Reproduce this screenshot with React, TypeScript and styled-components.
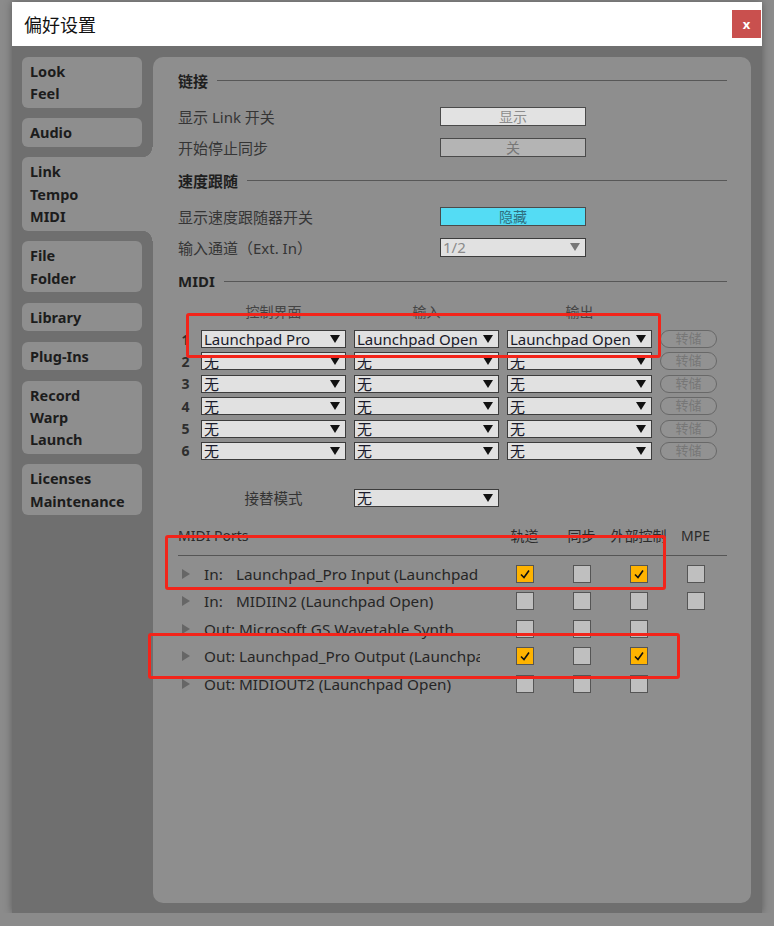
import styled, { createGlobalStyle } from 'styled-components';

const GlobalStyle = createGlobalStyle`
  html, body {
    margin: 0;
    padding: 0;
    background: #8b8b8b;
  }
  body {
    font-family: "Noto Sans", "Noto Sans CJK SC", sans-serif;
  }
`;

const Win = styled.div`
  position: relative;
  margin: 2px 0 0 12px;
  width: 750px;
  box-shadow: 0 0 8px rgba(0, 0, 0, 0.35);
`;

const TitleBar = styled.div`
  height: 44px;
  background: #fff;
  display: flex;
  align-items: center;
  justify-content: space-between;
  padding: 0 1px 0 12px;
`;

const Title = styled.div`
  font-family: "Noto Sans CJK SC", sans-serif;
  font-size: 18px;
  color: #111;
`;

const CloseBtn = styled.div`
  width: 29px;
  height: 28px;
  background: #c9504e;
  color: #fff;
  font-weight: bold;
  font-size: 13px;
  display: flex;
  align-items: center;
  justify-content: center;
`;

const Body = styled.div`
  height: 867px;
  box-sizing: border-box;
  background: #6f6f6f;
  display: flex;
  gap: 11px;
  padding: 11px 11px 10px 10px;
`;

const Sidebar = styled.div`
  width: 120px;
  flex: none;
  display: flex;
  flex-direction: column;
  gap: 10.6px;
`;

const Tab = styled.div<{ $active?: boolean }>`
  position: relative;
  background: #8e8e8e;
  border-radius: ${(p) => (p.$active ? '6px 0 0 6px' : '6px')};
  width: ${(p) => (p.$active ? '131px' : '120px')};
  padding: 3px 8px;
  box-sizing: border-box;
  font-size: 14.5px;
  font-weight: bold;
  line-height: 22.4px;
  color: #1c1c1c;

  ${(p) =>
    p.$active &&
    `
    &::before, &::after {
      content: '';
      position: absolute;
      left: 120px;
      width: 11px;
      height: 10px;
    }
    &::before {
      top: -10px;
      background: radial-gradient(circle at 0 0, transparent 10px, #8e8e8e 10.5px);
    }
    &::after {
      bottom: -10px;
      background: radial-gradient(circle at 0 100%, transparent 10px, #8e8e8e 10.5px);
    }
  `}
`;

const Panel = styled.div`
  flex: 1;
  background: #8e8e8e;
  border-radius: 10px;
  padding: 13px 24px 0 25px;
  box-sizing: border-box;
`;

const SectionHead = styled.div<{ $mt?: number }>`
  display: flex;
  align-items: center;
  height: 20px;
  margin-top: ${(p) => p.$mt ?? 0}px;
  font-size: 15px;
  font-weight: bold;
  color: #1e1e1e;

  &::after {
    content: '';
    flex: 1;
    height: 1px;
    background: #575757;
    margin-left: 9px;
  }
`;

const SettingRow = styled.div<{ $mt: number }>`
  display: flex;
  align-items: center;
  height: 20px;
  margin-top: ${(p) => p.$mt}px;
`;

const Label = styled.div`
  width: 262px;
  font-size: 15px;
  color: #353535;
`;

const Toggle = styled.div<{ $bg: string; $fg: string }>`
  width: 146px;
  height: 19px;
  box-sizing: border-box;
  border: 1px solid #4a4a4a;
  background: ${(p) => p.$bg};
  color: ${(p) => p.$fg};
  font-size: 14px;
  line-height: 17px;
  text-align: center;
`;

const Select = styled.div<{ $w?: number; $dim?: boolean }>`
  width: ${(p) => p.$w ?? 145}px;
  height: ${(p) => (p.$dim ? 19 : 18)}px;
  box-sizing: border-box;
  border: 1px solid #3c3c3c;
  background: #e1e1e1;
  color: ${(p) => (p.$dim ? '#8a8a8a' : '#1a1a2a')};
  display: flex;
  align-items: center;
  justify-content: space-between;
  padding: 0 5px 0 2px;
  font-size: 15px;
  white-space: nowrap;
  overflow: hidden;
`;

const Arrow = styled.span<{ $dim?: boolean }>`
  flex: none;
  width: 0;
  height: 0;
  border-left: 5px solid transparent;
  border-right: 5px solid transparent;
  border-top: 8px solid ${(p) => (p.$dim ? '#777' : '#111')};
`;

const TableHead = styled.div`
  display: grid;
  grid-template-columns: 15px 145px 145px 145px 57px;
  column-gap: 8px;
  margin-top: 13px;
  height: 16px;
  font-size: 14px;
  line-height: 16px;
  color: #444;
  text-align: center;
`;

const MidiGrid = styled.div<{ $mt: number }>`
  display: grid;
  grid-template-columns: 15px 145px 145px 145px 57px;
  column-gap: 8px;
  row-gap: 4.4px;
  grid-auto-rows: 18px;
  align-items: center;
  margin-top: ${(p) => p.$mt}px;
`;

const RowNum = styled.div`
  font-size: 14px;
  font-weight: bold;
  color: #2e2e2e;
  text-align: center;
`;

const DumpBtn = styled.div`
  height: 18px;
  box-sizing: border-box;
  border: 1.5px solid #686868;
  border-radius: 9px;
  background: #929292;
  color: #777;
  font-size: 13px;
  line-height: 15px;
  text-align: center;
`;

const AltLabel = styled.div`
  grid-column: 2;
  text-align: center;
  font-size: 14.5px;
  color: #333;
`;

const PortsHead = styled.div`
  display: grid;
  grid-template-columns: 318px repeat(4, 57px);
  margin-top: 21px;
  height: 27px;
  border-bottom: 1px solid #555;
  font-size: 14px;
  line-height: 16px;
  color: #2a2a2a;
  padding-right: 3px;

  & > div:not(:first-child) {
    text-align: center;
  }
`;

const PortsList = styled.div`
  margin-top: 4px;
`;

const PortRow = styled.div`
  display: grid;
  grid-template-columns: 318px repeat(4, 57px);
  height: 27.5px;
  align-items: center;
  justify-items: center;
`;

const PortName = styled.div`
  justify-self: start;
  width: 302px;
  display: flex;
  align-items: center;
  overflow: hidden;
  white-space: nowrap;
  font-size: 15.3px;
  color: #262626;
`;

const Tri = styled.span`
  flex: none;
  width: 0;
  height: 0;
  border-top: 5px solid transparent;
  border-bottom: 5px solid transparent;
  border-left: 8px solid #666;
  margin: 0 14px 0 4px;
`;

const Dir = styled.span`
  flex: none;
  width: 32px;
`;

const Check = styled.div<{ $on?: boolean }>`
  width: 18px;
  height: 18px;
  box-sizing: border-box;
  border: 1.5px solid #555;
  background: ${(p) => (p.$on ? '#ffb300' : '#bfbfbf')};
  display: flex;
  align-items: center;
  justify-content: center;
`;

const Mark = styled.div<{ $l: number; $t: number; $w: number; $h: number }>`
  position: absolute;
  left: ${(p) => p.$l}px;
  top: ${(p) => p.$t}px;
  width: ${(p) => p.$w}px;
  height: ${(p) => p.$h}px;
  box-sizing: border-box;
  border: 3px solid #f3241a;
  border-radius: 3px;
  pointer-events: none;
`;

const tabs = [
  ['Look', 'Feel'],
  ['Audio'],
  ['Link', 'Tempo', 'MIDI'],
  ['File', 'Folder'],
  ['Library'],
  ['Plug-Ins'],
  ['Record', 'Warp', 'Launch'],
  ['Licenses', 'Maintenance'],
];

const surfaces = [
  ['Launchpad Pro', 'Launchpad Open', 'Launchpad Open'],
  ['无', '无', '无'],
  ['无', '无', '无'],
  ['无', '无', '无'],
  ['无', '无', '无'],
  ['无', '无', '无'],
];

type Port = { dir: string; name: string; checks: (boolean | null)[] };

const ports: Port[] = [
  { dir: 'In:', name: 'Launchpad_Pro Input (Launchpad Pro)', checks: [true, false, true, false] },
  { dir: 'In:', name: 'MIDIIN2 (Launchpad Open)', checks: [false, false, false, false] },
  { dir: 'Out:', name: 'Microsoft GS Wavetable Synth', checks: [false, false, false, null] },
  { dir: 'Out:', name: 'Launchpad_Pro Output (Launchpad Pro)', checks: [true, false, true, null] },
  { dir: 'Out:', name: 'MIDIOUT2 (Launchpad Open)', checks: [false, false, false, null] },
];

const Tick = () => (
  <svg width="12" height="12" viewBox="0 0 12 12">
    <polyline points="2,6.5 5,9.5 10,2.5" fill="none" stroke="#111" strokeWidth="1.6" />
  </svg>
);

export default function App() {
  return (
    <>
      <GlobalStyle />
      <Win>
        <TitleBar>
          <Title>偏好设置</Title>
          <CloseBtn>x</CloseBtn>
        </TitleBar>
        <Body>
          <Sidebar>
            {tabs.map((t, i) => (
              <Tab key={i} $active={i === 2}>
                {t.map((l) => (
                  <div key={l}>{l}</div>
                ))}
              </Tab>
            ))}
          </Sidebar>
          <Panel>
            <SectionHead>链接</SectionHead>
            <SettingRow $mt={16}>
              <Label>显示 Link 开关</Label>
              <Toggle $bg="#e2e2e2" $fg="#8c8c8c">显示</Toggle>
            </SettingRow>
            <SettingRow $mt={11}>
              <Label>开始停止同步</Label>
              <Toggle $bg="#b4b4b4" $fg="#777">关</Toggle>
            </SettingRow>
            <SectionHead $mt={13}>速度跟随</SectionHead>
            <SettingRow $mt={16}>
              <Label>显示速度跟随器开关</Label>
              <Toggle $bg="#54dcf4" $fg="#2f6f80">隐藏</Toggle>
            </SettingRow>
            <SettingRow $mt={11}>
              <Label>输入通道（Ext. In）</Label>
              <Select $w={146} $dim>
                1/2
                <Arrow $dim />
              </Select>
            </SettingRow>
            <SectionHead $mt={14}>MIDI</SectionHead>

            <TableHead>
              <div />
              <div>控制界面</div>
              <div>输入</div>
              <div>输出</div>
              <div />
            </TableHead>
            <MidiGrid $mt={10}>
              {surfaces.map((row, i) => [
                <RowNum key={`n${i}`}>{i + 1}</RowNum>,
                ...row.map((v, j) => (
                  <Select key={`s${i}${j}`}>
                    {v}
                    <Arrow />
                  </Select>
                )),
                <DumpBtn key={`d${i}`}>转储</DumpBtn>,
              ])}
            </MidiGrid>
            <MidiGrid $mt={29}>
              <AltLabel>接替模式</AltLabel>
              <Select>
                无
                <Arrow />
              </Select>
            </MidiGrid>

            <PortsHead>
              <div>MIDI Ports</div>
              <div>轨道</div>
              <div>同步</div>
              <div>外部控制</div>
              <div>MPE</div>
            </PortsHead>
            <PortsList>
              {ports.map((p, i) => (
                <PortRow key={i}>
                  <PortName>
                    <Tri />
                    {p.dir === 'In:' ? (
                      <>
                        <Dir>In:</Dir>
                        {p.name}
                      </>
                    ) : (
                      <>Out:&nbsp;{p.name}</>
                    )}
                  </PortName>
                  {p.checks.map((c, j) =>
                    c === null ? (
                      <div key={j} />
                    ) : (
                      <Check key={j} $on={c}>
                        {c && <Tick />}
                      </Check>
                    )
                  )}
                </PortRow>
              ))}
            </PortsList>
          </Panel>
        </Body>
        <Mark $l={174} $t={311} $w={475} $h={45} />
        <Mark $l={153} $t={533} $w={501} $h={55} />
        <Mark $l={136} $t={631} $w={532} $h={46} />
      </Win>
    </>
  );
}
